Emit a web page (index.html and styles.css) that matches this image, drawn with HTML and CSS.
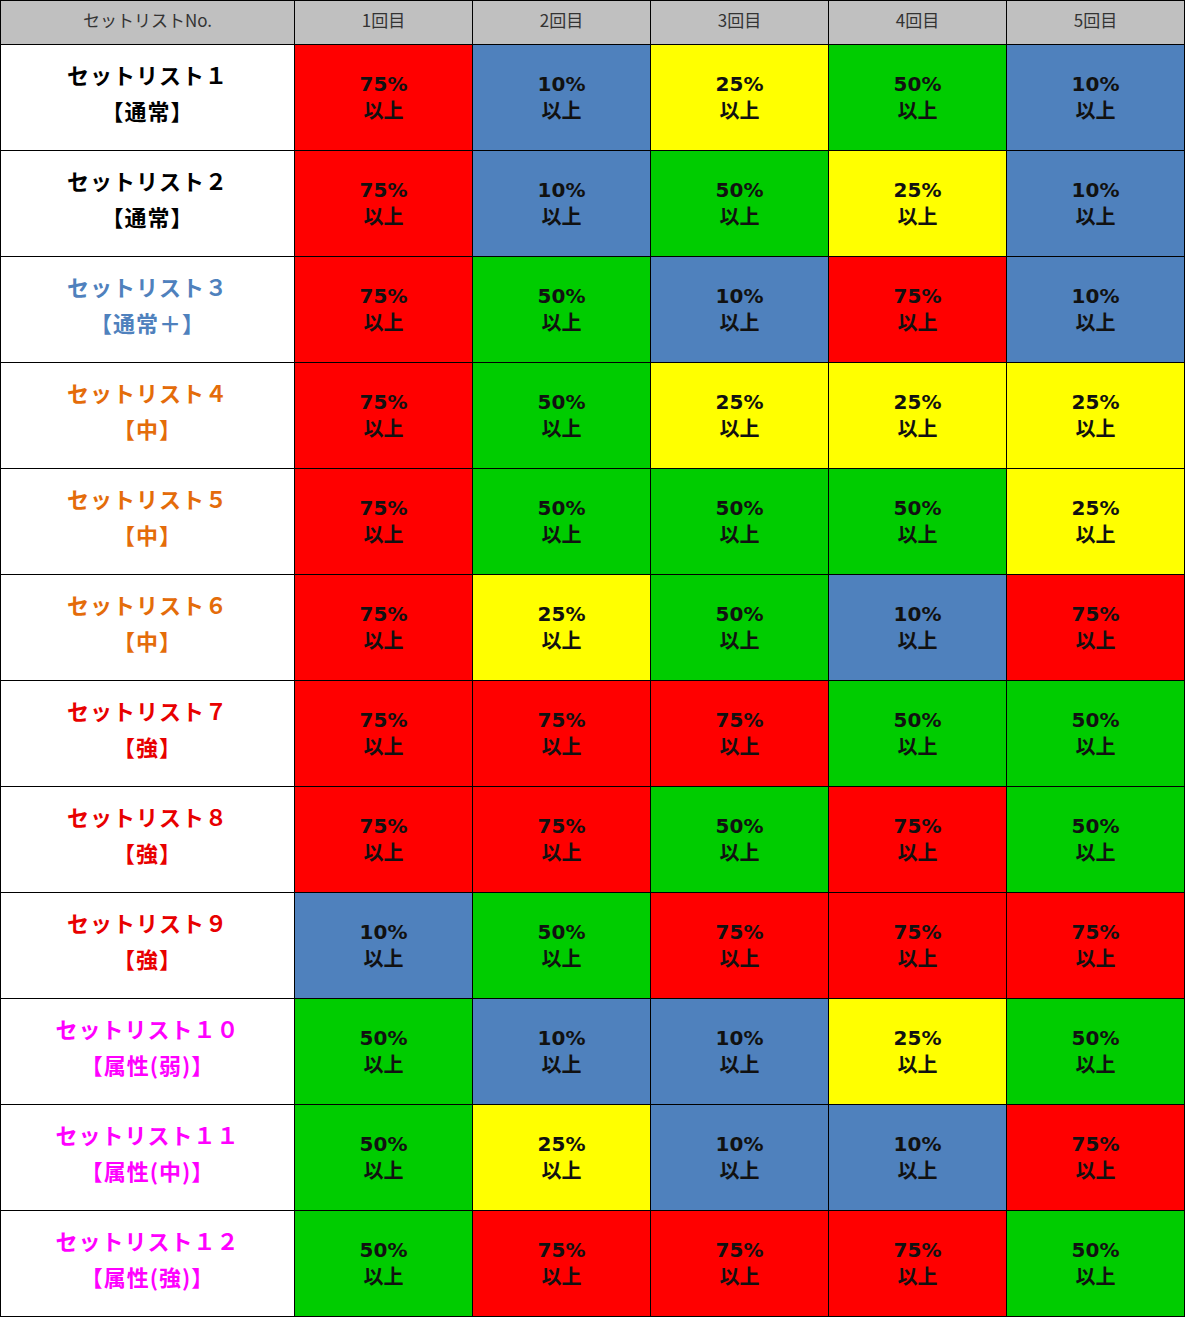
FILE: index.html
```html
<!DOCTYPE html>
<html lang="ja">
<head>
<meta charset="utf-8">
<title>セットリスト</title>
<link rel="stylesheet" href="styles.css">
</head>
<body>
<div class="grid">
  <div class="hd">セットリストNo.</div>
  <div class="hd">1回目</div>
  <div class="hd">2回目</div>
  <div class="hd">3回目</div>
  <div class="hd">4回目</div>
  <div class="hd">5回目</div>

  <div class="name black"><p>セットリスト１<br>【通常】</p></div>
  <div class="c r"><p>75%<br>以上</p></div>
  <div class="c b"><p>10%<br>以上</p></div>
  <div class="c y"><p>25%<br>以上</p></div>
  <div class="c g"><p>50%<br>以上</p></div>
  <div class="c b"><p>10%<br>以上</p></div>

  <div class="name black"><p>セットリスト２<br>【通常】</p></div>
  <div class="c r"><p>75%<br>以上</p></div>
  <div class="c b"><p>10%<br>以上</p></div>
  <div class="c g"><p>50%<br>以上</p></div>
  <div class="c y"><p>25%<br>以上</p></div>
  <div class="c b"><p>10%<br>以上</p></div>

  <div class="name blue"><p>セットリスト３<br>【通常＋】</p></div>
  <div class="c r"><p>75%<br>以上</p></div>
  <div class="c g"><p>50%<br>以上</p></div>
  <div class="c b"><p>10%<br>以上</p></div>
  <div class="c r"><p>75%<br>以上</p></div>
  <div class="c b"><p>10%<br>以上</p></div>

  <div class="name orange"><p>セットリスト４<br>【中】</p></div>
  <div class="c r"><p>75%<br>以上</p></div>
  <div class="c g"><p>50%<br>以上</p></div>
  <div class="c y"><p>25%<br>以上</p></div>
  <div class="c y"><p>25%<br>以上</p></div>
  <div class="c y"><p>25%<br>以上</p></div>

  <div class="name orange"><p>セットリスト５<br>【中】</p></div>
  <div class="c r"><p>75%<br>以上</p></div>
  <div class="c g"><p>50%<br>以上</p></div>
  <div class="c g"><p>50%<br>以上</p></div>
  <div class="c g"><p>50%<br>以上</p></div>
  <div class="c y"><p>25%<br>以上</p></div>

  <div class="name orange"><p>セットリスト６<br>【中】</p></div>
  <div class="c r"><p>75%<br>以上</p></div>
  <div class="c y"><p>25%<br>以上</p></div>
  <div class="c g"><p>50%<br>以上</p></div>
  <div class="c b"><p>10%<br>以上</p></div>
  <div class="c r"><p>75%<br>以上</p></div>

  <div class="name red"><p>セットリスト７<br>【強】</p></div>
  <div class="c r"><p>75%<br>以上</p></div>
  <div class="c r"><p>75%<br>以上</p></div>
  <div class="c r"><p>75%<br>以上</p></div>
  <div class="c g"><p>50%<br>以上</p></div>
  <div class="c g"><p>50%<br>以上</p></div>

  <div class="name red"><p>セットリスト８<br>【強】</p></div>
  <div class="c r"><p>75%<br>以上</p></div>
  <div class="c r"><p>75%<br>以上</p></div>
  <div class="c g"><p>50%<br>以上</p></div>
  <div class="c r"><p>75%<br>以上</p></div>
  <div class="c g"><p>50%<br>以上</p></div>

  <div class="name red"><p>セットリスト９<br>【強】</p></div>
  <div class="c b"><p>10%<br>以上</p></div>
  <div class="c g"><p>50%<br>以上</p></div>
  <div class="c r"><p>75%<br>以上</p></div>
  <div class="c r"><p>75%<br>以上</p></div>
  <div class="c r"><p>75%<br>以上</p></div>

  <div class="name pink"><p>セットリスト１０<br>【属性(弱)】</p></div>
  <div class="c g"><p>50%<br>以上</p></div>
  <div class="c b"><p>10%<br>以上</p></div>
  <div class="c b"><p>10%<br>以上</p></div>
  <div class="c y"><p>25%<br>以上</p></div>
  <div class="c g"><p>50%<br>以上</p></div>

  <div class="name pink"><p>セットリスト１１<br>【属性(中)】</p></div>
  <div class="c g"><p>50%<br>以上</p></div>
  <div class="c y"><p>25%<br>以上</p></div>
  <div class="c b"><p>10%<br>以上</p></div>
  <div class="c b"><p>10%<br>以上</p></div>
  <div class="c r"><p>75%<br>以上</p></div>

  <div class="name pink"><p>セットリスト１２<br>【属性(強)】</p></div>
  <div class="c g"><p>50%<br>以上</p></div>
  <div class="c r"><p>75%<br>以上</p></div>
  <div class="c r"><p>75%<br>以上</p></div>
  <div class="c r"><p>75%<br>以上</p></div>
  <div class="c g"><p>50%<br>以上</p></div>
</div>
</body>
</html>
```
FILE: styles.css
```css
html, body {
  margin: 0;
  padding: 0;
  background: #fff;
}
body {
  font-family: "Noto Sans CJK JP", "Noto Sans", sans-serif;
}
p {
  margin: 0;
  text-align: center;
}
.grid {
  display: grid;
  grid-template-columns: 293px repeat(5, 177px);
  grid-template-rows: 43px repeat(12, 105px);
  gap: 1px;
  padding: 1px;
  background: #000;
  width: 1185px;
  box-sizing: border-box;
}
.hd {
  background: #c0c0c0;
  color: #333;
  font-size: 17px;
  display: flex;
  align-items: center;
  justify-content: center;
  padding-bottom: 6px;
  box-sizing: border-box;
}
.name {
  background: #fff;
  display: flex;
  align-items: center;
  justify-content: center;
  font-size: 22px;
  font-weight: bold;
  line-height: 36px;
  padding-bottom: 12px;
  box-sizing: border-box;
  letter-spacing: 1px;
}
.black { color: #000; }
.blue { color: #4f81bd; }
.orange { color: #e46c0a; }
.red { color: #e80000; }
.pink { color: #f0f; }
.c {
  display: flex;
  align-items: center;
  justify-content: center;
  font-family: "DejaVu Sans", "Noto Sans CJK JP", sans-serif;
  font-size: 20px;
  font-weight: bold;
  line-height: 27px;
  padding-bottom: 0;
  box-sizing: border-box;
  color: #111;
}
.r { background: #ff0000; }
.b { background: #4f81bd; }
.y { background: #ffff00; }
.g { background: #00cc00; }
```
